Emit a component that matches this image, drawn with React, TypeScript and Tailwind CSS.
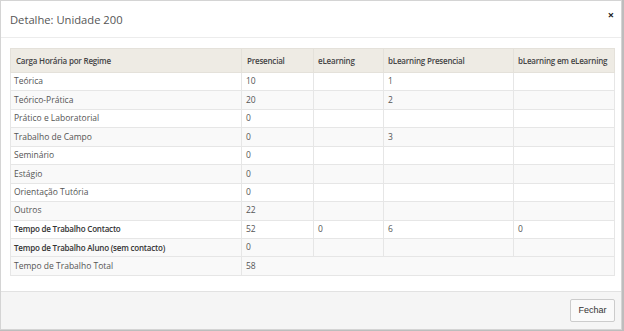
import React from "react";

const rows: { label: string; bold?: boolean; cells: string[] }[] = [
  { label: "Teórica", cells: ["10", "", "1", ""] },
  { label: "Teórico-Prática", cells: ["20", "", "2", ""] },
  { label: "Prático e Laboratorial", cells: ["0", "", "", ""] },
  { label: "Trabalho de Campo", cells: ["0", "", "3", ""] },
  { label: "Seminário", cells: ["0", "", "", ""] },
  { label: "Estágio", cells: ["0", "", "", ""] },
  { label: "Orientação Tutória", cells: ["0", "", "", ""] },
  { label: "Outros", cells: ["22", "", "", ""] },
  { label: "Tempo de Trabalho Contacto", bold: true, cells: ["52", "0", "6", "0"] },
  { label: "Tempo de Trabalho Aluno (sem contacto)", bold: true, cells: ["0", "", "", ""] },
];

export default function App() {
  return (
    <div className="w-[624px] h-[331px] bg-[#bdbdbd] font-['Open_Sans',sans-serif] overflow-hidden">
      <div className="w-[622px] h-[330px] bg-white border border-[#d4d4d4] flex flex-col">
        <div className="h-[37px] flex items-center pl-[9px] border-b border-[#ececec] relative">
          <span className="text-[11.2px] text-[#555] mt-[2px] whitespace-nowrap">Detalhe: Unidade 200</span>
          <span className="absolute right-[7px] top-[8px] text-[11px] font-bold text-[#222] leading-none">×</span>
        </div>
        <div className="h-[253px] pt-[10px] px-[9px]">
          <table className="border-collapse w-[604px] table-fixed text-[8.5px] text-[#555] whitespace-nowrap">
            <colgroup>
              <col className="w-[231px]" />
              <col className="w-[72px]" />
              <col className="w-[70px]" />
              <col className="w-[130px]" />
              <col className="w-[101px]" />
            </colgroup>
            <thead>
              <tr className="h-[24px] bg-[#eeebe4] text-[#444] text-[8px] tracking-[-0.2px]">
                <th className="text-left font-semibold pl-[5px] border border-[#e4e1da]">Carga Horária por Regime</th>
                <th className="text-left font-semibold pl-[5px] border border-[#e4e1da]">Presencial</th>
                <th className="text-left font-semibold pl-[4px] border border-[#e4e1da]">eLearning</th>
                <th className="text-left font-semibold pl-[4px] border border-[#e4e1da]">bLearning Presencial</th>
                <th className="text-left font-semibold pl-[4px] border border-[#e4e1da]">bLearning em eLearning</th>
              </tr>
            </thead>
            <tbody>
              {rows.map((r, i) => (
                <tr key={i} className={`h-[18.45px] ${i % 2 === 1 ? "bg-[#f9f9f9]" : "bg-white"}`}>
                  <td className={`pl-[3px] border border-[#e6e6e6] ${r.bold ? "font-semibold text-[#333] text-[8px] tracking-[-0.2px]" : ""}`}>{r.label}</td>
                  {r.cells.map((c, j) => (
                    <td key={j} className="pl-[4px] border border-[#e6e6e6]">{c}</td>
                  ))}
                </tr>
              ))}
              <tr className="h-[18.45px] bg-[#f9f9f9]">
                <td className="pl-[3px] border border-[#e6e6e6]">Tempo de Trabalho Total</td>
                <td colSpan={4} className="pl-[4px] border border-[#e6e6e6]">58</td>
              </tr>
            </tbody>
          </table>
        </div>
        <div className="flex-1 bg-[#f5f5f5] border-t border-[#e2e2e2] flex items-center justify-end pr-[6px]">
          <button className="w-[45px] h-[23px] border border-[#ccc] rounded-[2px] bg-[#fafafa] text-[9px] text-[#333] font-['Liberation_Sans',sans-serif]">
            Fechar
          </button>
        </div>
      </div>
    </div>
  );
}
